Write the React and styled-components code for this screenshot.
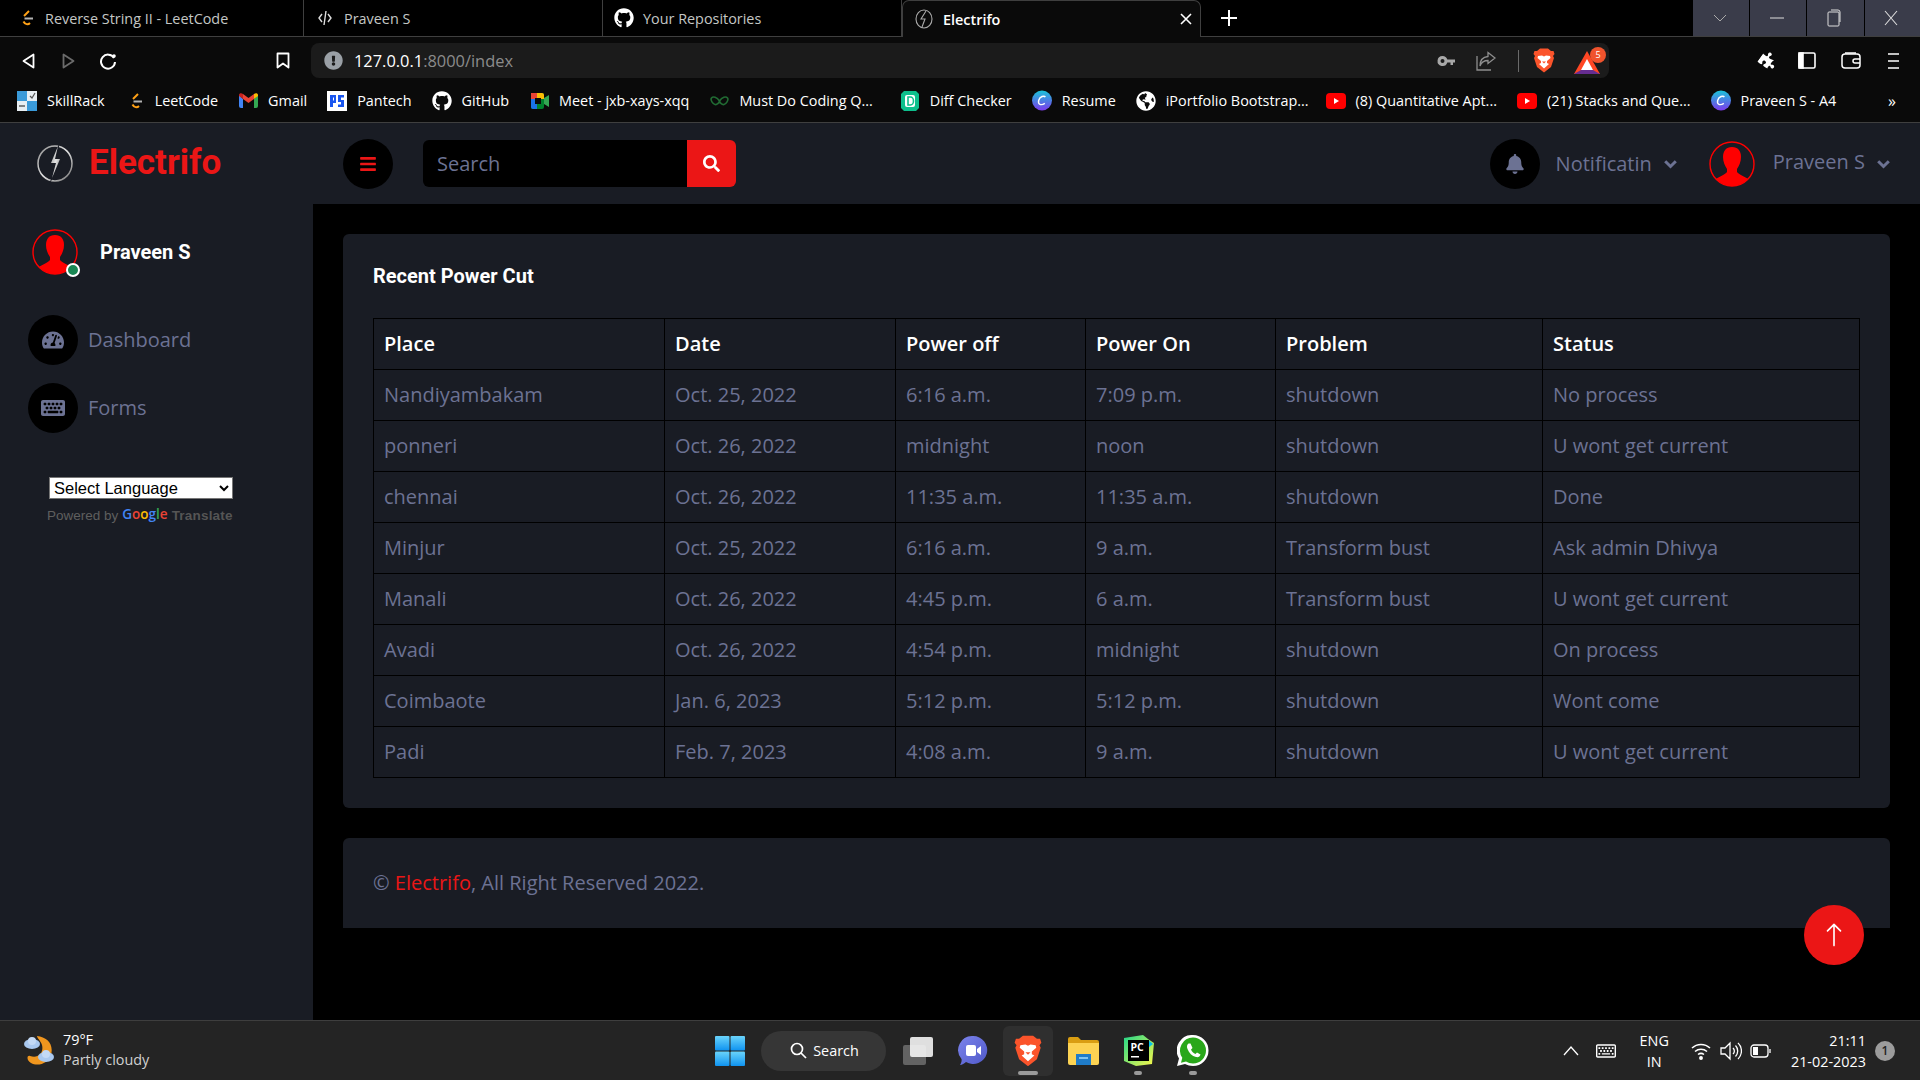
import React from 'react';
import styled, { createGlobalStyle } from 'styled-components';
import {
  FaBars, FaSearch, FaBell, FaTachometerAlt, FaKeyboard, FaGithub,
  FaPuzzlePiece, FaGlobeAmericas, FaExclamationCircle, FaRegKeyboard,
} from 'react-icons/fa';
import { BsArrowUp } from 'react-icons/bs';

const GlobalStyle = createGlobalStyle`
  html, body { margin: 0; padding: 0; background: #000; }
  * { box-sizing: border-box; }
  body { font-family: "Open Sans", sans-serif; }
`;

const Screen = styled.div`
  width: 1920px;
  height: 1080px;
  display: flex;
  flex-direction: column;
  overflow: hidden;
  position: relative;
`;

/* ---------- browser chrome ---------- */
const TabStrip = styled.div`
  height: 37px;
  background: #000;
  display: flex;
  padding-left: 5px;
  border-bottom: 1px solid #3f3f3f;
  flex-shrink: 0;
`;
const Tab = styled.div`
  width: 299px;
  height: ${p => (p.$active ? '37px' : '36px')};
  display: flex;
  align-items: center;
  padding-left: 11px;
  gap: 9px;
  font-size: 14.4px;
  color: ${p => (p.$active ? '#fff' : '#c4c7c5')};
  font-weight: ${p => (p.$active ? 600 : 400)};
  background: ${p => (p.$active ? '#0a0a0a' : 'transparent')};
  border-right: 1px solid #3f3f3f;
  border-left: ${p => (p.$active ? '1px solid #3f3f3f' : 'none')};
  border-top: ${p => (p.$active ? '1px solid #3f3f3f' : 'none')};
  border-radius: ${p => (p.$active ? '7px 7px 0 0' : '0')};
  position: relative;
  z-index: 1;
`;
const TabIcon = styled.span`
  width: 20px;
  height: 20px;
  display: flex;
  align-items: center;
  justify-content: center;
  color: #fff;
  flex-shrink: 0;
`;
const TabClose = styled.span`
  margin-left: auto;
  margin-right: 8px;
  display: flex;
`;
const NewTab = styled.div`
  width: 55px;
  height: 36px;
  display: flex;
  align-items: center;
  justify-content: center;
`;
const WindowButtons = styled.div`
  margin-left: auto;
  display: flex;
  height: 36px;
`;
const WindowButton = styled.div`
  width: ${p => p.$w}px;
  background: #3a3c4a;
  border-left: 1px solid #000;
  padding-right: 3px;
  display: flex;
  align-items: center;
  justify-content: center;
`;
const Toolbar = styled.div`
  height: 47px;
  background: #0a0a0a;
  display: flex;
  align-items: center;
  padding-left: 16px;
  flex-shrink: 0;
`;
const ToolButton = styled.div`
  width: ${p => p.$w || 24}px;
  height: 24px;
  display: flex;
  align-items: center;
  justify-content: center;
  color: ${p => p.$color || '#fff'};
  margin-left: ${p => p.$ml || 0}px;
  flex-shrink: 0;
`;
const UrlBar = styled.div`
  width: 1298px;
  height: 35px;
  margin-left: 16px;
  background: #1b1b1b;
  border-radius: 8px;
  display: flex;
  align-items: center;
  padding-left: 13px;
  flex-shrink: 0;
`;
const UrlText = styled.div`
  margin-left: 11px;
  font-size: 16.4px;
  color: #fff;
  span { color: #8b8b8b; }
`;
const UrlDivider = styled.div`
  width: 1px;
  height: 22px;
  background: #6b6b6b;
  margin-left: 20px;
  margin-right: 13px;
`;
const UrlTools = styled.div`
  margin-left: auto;
  display: flex;
  align-items: center;
  padding-right: 1px;
`;
const BookmarkBar = styled.div`
  height: 39px;
  background: #0a0a0a;
  border-bottom: 1px solid #3f3f3f;
  display: flex;
  align-items: center;
  padding: 0 0 5px 17px;
  gap: 20px;
  flex-shrink: 0;
  position: relative;
`;
const Bookmark = styled.div`
  display: flex;
  align-items: center;
  gap: 10px;
  margin-left: ${p => p.$shift || 0}px;
  font-size: 14.4px;
  color: #fff;
  white-space: nowrap;
`;
const BookmarkIcon = styled.span`
  width: 20px;
  height: 20px;
  display: flex;
  align-items: center;
  justify-content: center;
  flex-shrink: 0;
`;
const MoreBookmarks = styled.div`
  margin-left: auto;
  margin-right: 24px;
  color: #fff;
  font-size: 16px;
`;

/* ---------- app ---------- */
const AppFrame = styled.div`
  flex: 1;
  display: flex;
  min-height: 0;
  background: #000;
`;
const Sidebar = styled.aside`
  width: 313px;
  background: #191c24;
  flex-shrink: 0;
`;
const Brand = styled.div`
  height: 81px;
  display: flex;
  align-items: center;
  padding-left: 36px;
  gap: 15px;
`;
const BrandName = styled.h3`
  margin: 0 0 2px;
  font-family: Roboto, sans-serif;
  font-weight: 700;
  font-size: 35px;
  line-height: 1.2;
  color: #eb1616;
`;
const Profile = styled.div`
  margin-top: 25px;
  padding-left: 32px;
  display: flex;
  align-items: center;
  gap: 22px;
`;
const AvatarWrap = styled.div`
  position: relative;
  width: 46px;
  height: 46px;
`;
const OnlineDot = styled.span`
  position: absolute;
  right: -2px;
  bottom: -2px;
  width: 14px;
  height: 14px;
  border-radius: 50%;
  background: #198754;
  border: 2px solid #fff;
`;
const ProfileName = styled.h6`
  margin: 0;
  font-family: Roboto, sans-serif;
  font-weight: 700;
  font-size: 20px;
  line-height: 1.2;
  color: #fff;
`;
const SideNav = styled.nav`
  margin-top: 40px;
  padding-left: 28px;
  display: flex;
  flex-direction: column;
  gap: 18px;
`;
const SideLink = styled.a`
  display: flex;
  align-items: center;
  gap: 10px;
  font-size: 20px;
  color: #6c7293;
`;
const SideLabel = styled.span`
  margin-top: -2px;
`;
const IconCircle = styled.span`
  width: 50px;
  height: 50px;
  border-radius: 50%;
  background: #000;
  display: flex;
  align-items: center;
  justify-content: center;
  color: ${p => p.$color || '#6c7293'};
  flex-shrink: 0;
`;
const Translate = styled.div`
  margin-top: 44px;
  padding-left: 47px;
`;
const LangSelect = styled.select`
  display: block;
  margin-left: 2px;
  width: 184px;
  height: 22px;
  font-family: "Liberation Sans", Arial, sans-serif;
  font-size: 16.5px;
  background: #fff;
  color: #000;
  border: 1px solid #767676;
`;
const PoweredBy = styled.div`
  margin-top: 9px;
  font-size: 13.5px;
  color: #5f5f5f;
  font-family: "Liberation Sans", Arial, sans-serif;
  display: flex;
  align-items: center;
  gap: 4px;
  white-space: nowrap;
`;
const GoogleWord = styled.b`
  font-family: "Open Sans", sans-serif;
  font-weight: 600;
  font-size: 13.5px;
  margin-top: -4px;
  span:nth-child(1) { color: #4285f4; }
  span:nth-child(2) { color: #ea4335; }
  span:nth-child(3) { color: #fbbc05; }
  span:nth-child(4) { color: #4285f4; }
  span:nth-child(5) { color: #34a853; }
  span:nth-child(6) { color: #ea4335; }
`;
const TranslateWord = styled.span`
  font-weight: 700;
  color: #555;
  letter-spacing: .2px;
`;

const Main = styled.main`
  flex: 1;
  min-width: 0;
  display: flex;
  flex-direction: column;
`;
const TopBar = styled.header`
  height: 81px;
  background: #191c24;
  display: flex;
  align-items: center;
  padding: 0 30px;
  flex-shrink: 0;
`;
const SearchBox = styled.div`
  margin-left: 30px;
  display: flex;
  height: 47px;
`;
const SearchInput = styled.input`
  width: 264px;
  height: 47px;
  background: #000;
  border: none;
  border-radius: 6px 0 0 6px;
  padding: 0 14px;
  font-family: "Open Sans", sans-serif;
  font-size: 20px;
  color: #6c7293;
  outline: none;
  &::placeholder { color: #6c7293; opacity: 1; }
`;
const SearchButton = styled.button`
  width: 49px;
  height: 47px;
  border: none;
  background: #eb1616;
  border-radius: 0 6px 6px 0;
  color: #fff;
  display: flex;
  align-items: center;
  justify-content: center;
  padding: 0;
`;
const TopRight = styled.div`
  margin-left: auto;
  display: flex;
  align-items: center;
`;
const TopLink = styled.div`
  display: flex;
  align-items: center;
  font-size: 20px;
  color: #6c7293;
  margin-left: ${p => p.$ml || 0}px;
`;
const TopLabel = styled.span`
  margin-left: ${p => p.$ml}px;
  margin-right: 12px;
  margin-top: ${p => p.$mt || 0}px;
  white-space: nowrap;
`;
const Content = styled.div`
  padding: 30px 30px 0;
`;
const Card = styled.section`
  background: #191c24;
  border-radius: 6px;
  padding: 30px;
`;
const CardTitle = styled.h6`
  margin: 0 0 30px;
  font-family: Roboto, sans-serif;
  font-weight: 700;
  font-size: 20px;
  line-height: 1.2;
  color: #fff;
`;
const Table = styled.table`
  width: 1486px;
  table-layout: fixed;
  border-collapse: collapse;
  font-size: 20px;
  line-height: 30px;
  color: #6c7293;
  th, td {
    border: 1px solid #000;
    padding: 10px;
    text-align: left;
    white-space: nowrap;
  }
  th {
    color: #fff;
    font-weight: 600;
  }
`;
const Footer = styled.footer`
  margin-top: 30px;
  background: #191c24;
  border-radius: 6px 6px 0 0;
  padding: 30px;
  font-size: 20px;
  line-height: 30px;
  color: #6c7293;
  span { color: #eb1616; }
`;
const BackToTop = styled.a`
  position: absolute;
  left: 1804px;
  top: 905px;
  width: 60px;
  height: 60px;
  border-radius: 50%;
  background: #eb1616;
  color: #fff;
  display: flex;
  align-items: center;
  justify-content: center;
`;

/* ---------- taskbar ---------- */
const Taskbar = styled.div`
  height: 60px;
  background: #242424;
  border-top: 1px solid #3e3e3e;
  display: grid;
  grid-template-columns: 715px 1fr auto;
  align-items: center;
  flex-shrink: 0;
  color: #fff;
`;
const Weather = styled.div`
  display: flex;
  align-items: center;
  padding-left: 24px;
  gap: 8px;
`;
const WeatherText = styled.div`
  font-size: 14.4px;
  line-height: 20px;
  margin-top: -2px;
  color: #fff;
  small { display: block; font-size: 14.4px; color: #d0d0d0; }
`;
const TaskCenter = styled.div`
  display: flex;
  align-items: center;
`;
const TaskSearch = styled.div`
  margin-left: 16px;
  width: 125px;
  height: 40px;
  background: #363636;
  border-radius: 20px;
  display: flex;
  align-items: center;
  justify-content: center;
  gap: 6px;
  font-size: 14.4px;
  margin-right: 7px;
  padding-left: 2px;
`;
const TaskApp = styled.div`
  width: 50px;
  height: 50px;
  margin-right: 5px;
  display: flex;
  align-items: center;
  justify-content: center;
  position: relative;
  border-radius: 6px;
  background: ${p => (p.$focus ? '#2f2f2f' : 'transparent')};
  &::after {
    content: '';
    display: ${p => (p.$open ? 'block' : 'none')};
    position: absolute;
    bottom: 1px;
    left: 50%;
    transform: translateX(-50%);
    width: ${p => (p.$focus ? '20px' : '8px')};
    height: 4px;
    border-radius: 2px;
    background: #9a9a9a;
  }
`;
const Tray = styled.div`
  display: flex;
  align-items: center;
  padding-right: 25px;
`;
const TrayIcon = styled.span`
  width: 24px;
  display: flex;
  justify-content: center;
  margin-left: ${p => p.$ml || 0}px;
`;
const Lang = styled.div`
  margin-left: 22px;
  margin-right: 20px;
  text-align: center;
  font-size: 14.4px;
  line-height: 21px;
`;
const Clock = styled.div`
  margin-left: 18px;
  text-align: right;
  font-size: 14.4px;
  line-height: 21px;
`;
const NotifBadge = styled.span`
  margin-left: 9px;
  width: 20px;
  height: 20px;
  border-radius: 50%;
  background: #9c9c9c;
  color: #222;
  font-size: 12px;
  font-weight: 600;
  display: flex;
  align-items: center;
  justify-content: center;
`;

/* ---------- drawings ---------- */
const Chevron = () => (
  <svg width="13" height="10" viewBox="0 0 13 10" fill="none" stroke="currentColor" strokeWidth="3">
    <path d="M1.200 2.200 6.500 7.500l5.300-5.300" />
  </svg>
);

const Avatar = ({ id }) => (
  <svg width="46" height="46" viewBox="0 0 46 46">
    <defs>
      <clipPath id={id}><circle cx="23" cy="23" r="22" /></clipPath>
    </defs>
    <g clipPath={`url(#${id})`} fill="#ff0000">
      <path d="M23 6c6 0 9 4 9 10 0 5-2 9-4 12v3c2 3 9 5 13 8v8H5v-8c4-3 11-5 13-8v-3c-2-3-4-7-4-12 0-6 3-10 9-10z" />
    </g>
    <circle cx="23" cy="23" r="22" fill="none" stroke="#ff0000" strokeWidth="1.400" />
  </svg>
);

const LogoMark = () => (
  <svg width="38" height="43" viewBox="0 0 38 43">
    <defs>
      <linearGradient id="metal" x1="0" y1="0" x2="1" y2="1">
        <stop offset="0" stopColor="#8a8a8a" />
        <stop offset=".5" stopColor="#e4e4e4" />
        <stop offset="1" stopColor="#6f6f6f" />
      </linearGradient>
    </defs>
    <ellipse cx="19" cy="21.500" rx="17" ry="17.500" fill="none" stroke="url(#metal)" strokeWidth="1.500" />
    <path d="M24 0 13 22h7l-7 21 14-26h-7z" fill="#191c24" />
    <path d="M22 4 15 21h5l-4 15 8-19h-5z" fill="url(#metal)" />
  </svg>
);

const LeetIcon = () => (
  <svg width="16" height="20" viewBox="0 0 16 20" fill="none" strokeWidth="2">
    <path d="M11 3 6 8" stroke="#ffa116" />
    <path d="M5.500 13.500c1.500 3 4.500 3.500 6.500 1.500" stroke="#ffa116" />
    <path d="M6.500 10.500H15" stroke="#b3b3b3" />
  </svg>
);

const SkillRackIcon = () => (
  <svg width="20" height="20" viewBox="0 0 20 20">
    <rect width="10" height="10" fill="#3a9ad9" />
    <rect x="10" width="10" height="10" fill="#e8eef2" />
    <rect y="10" width="10" height="10" fill="#e8eef2" />
    <rect x="10" y="10" width="10" height="10" fill="#3a9ad9" />
    <path d="M13 5l2 2 3-5" stroke="#555" strokeWidth="1.200" fill="none" />
    <path d="M2 15h6" stroke="#555" strokeWidth="1.400" />
  </svg>
);
const GmailIcon = () => (
  <svg width="19" height="15" viewBox="0 0 19 15">
    <path d="M0 2v11a2 2 0 0 0 2 2h2V6z" fill="#4285f4" />
    <path d="M19 2v11a2 2 0 0 1-2 2h-2V6z" fill="#34a853" />
    <path d="M15 1v5l4-3V2c0-2-2.500-2.500-4-1z" fill="#fbbc04" />
    <path d="M4 6V1l5.500 4L15 1v5l-5.500 4z" fill="#ea4335" />
    <path d="M0 2v1l4 3V1C2.500-.5 0 0 0 2z" fill="#c5221f" />
  </svg>
);
const PantechIcon = () => (
  <svg width="20" height="20" viewBox="0 0 20 20">
    <rect width="20" height="20" fill="#fff" />
    <path fillRule="evenodd" d="M3 4h6v8H6v4H3zM6 6.500v3h1v-3z" fill="#1a56f0" />
    <path d="M11 4h6v2.500h-3V9h3v7h-6v-2.500h3V11h-3z" fill="#1a56f0" />
  </svg>
);
const MeetIcon = () => (
  <svg width="19" height="18" viewBox="0 0 19 18">
    <rect x="1" y="1" width="13" height="16" rx="2" fill="#00832d" />
    <path d="M1 1h6v6H1z" fill="#ea4335" />
    <path d="M7 1h5a2 2 0 0 1 2 2v4H7z" fill="#fbbc04" />
    <path d="M1 7h6v10H3a2 2 0 0 1-2-2z" fill="#1a73e8" />
    <rect x="5" y="6" width="6" height="6" fill="#0a0a0a" />
    <path d="M14 6l5-3v12l-5-3z" fill="#34a853" />
  </svg>
);
const MustDoIcon = () => (
  <svg width="19" height="12" viewBox="0 0 19 12" fill="none" stroke="#216b33" strokeWidth="1.600">
    <path d="M9.500 6C7 2 3 1 1.500 3S3 9 5 9.500 9 8 9.500 6zM9.500 6c2.500-4 6.500-5 8-3s-1.500 6-3.500 6.500S10 8 9.500 6z" />
  </svg>
);
const DiffIcon = () => (
  <svg width="18" height="20" viewBox="0 0 18 20">
    <path d="M3 0h12l3 3v14l-3 3H3l-3-3V3z" fill="#0dbf8c" />
    <rect x="4" y="4" width="10" height="12" rx="2" fill="#fff" />
    <path d="M7 6h2.500a3 4 0 0 1 0 8H7z" fill="none" stroke="#0dbf8c" strokeWidth="1.600" />
  </svg>
);
const CanvaIcon = ({ id }) => (
  <svg width="21" height="21" viewBox="0 0 21 21">
    <defs>
      <linearGradient id={id} x1="0" y1="0" x2="0" y2="1">
        <stop offset="0" stopColor="#1bc4d8" />
        <stop offset="1" stopColor="#7c3aed" />
      </linearGradient>
    </defs>
    <circle cx="10.500" cy="10.500" r="10.500" fill={`url(#${id})`} />
    <path d="M14 7c-1-2-6-1-7 3.500S9.500 16 13.500 13.500" fill="none" stroke="#fff" strokeWidth="1.500" />
  </svg>
);
const YouTubeIcon = () => (
  <svg width="20" height="16" viewBox="0 0 20 16">
    <rect width="20" height="16" rx="4" fill="#f00" />
    <path d="M8 5l5 3-5 3z" fill="#fff" />
  </svg>
);
const BraveLion = ({ size = 22 }) => (
  <svg width={size} height={size * 1.14} viewBox="0 0 22 25">
    <path d="M4 3 7 .5h8L18 3l2.500 0 1 3L20 8l1 2-3 9-7 5.500L4 19l-3-9 1-2L.5 6l1-3z" fill="#fb542b" />
    <path d="M5 8l4-.5 2 1 2-1 4 .5.500 2L14 13v2l2 1-5 4.500L6 16l2-1v-2l-3.500-3z" fill="#fff" />
    <path d="M9 13.500h4L11 15.500z" fill="#fb542b" />
  </svg>
);
const BatIcon = () => (
  <svg width="34" height="28" viewBox="0 0 34 28">
    <path d="M13 4 0 27h26z" fill="#ff4724" />
    <path d="M13 12 7 23h12z" fill="#fff" />
    <path d="M0 27l7-4h12l7 4z" fill="#662d91" />
    <circle cx="24" cy="8" r="8" fill="#f0532d" />
    <text x="24" y="11" fontSize="9" fill="#fff" textAnchor="middle" fontFamily="Open Sans">5</text>
  </svg>
);
const WindowsLogo = () => (
  <svg width="30" height="30" viewBox="0 0 30 30">
    <defs>
      <linearGradient id="winblue" x1="0" y1="0" x2="0" y2="1">
        <stop offset="0" stopColor="#6ad4fb" />
        <stop offset="1" stopColor="#0f93f0" />
      </linearGradient>
    </defs>
    <rect width="14.500" height="14.500" rx="1" fill="url(#winblue)" />
    <rect x="15.500" width="14.500" height="14.500" rx="1" fill="url(#winblue)" />
    <rect y="15.500" width="14.500" height="14.500" rx="1" fill="url(#winblue)" />
    <rect x="15.500" y="15.500" width="14.500" height="14.500" rx="1" fill="url(#winblue)" />
  </svg>
);
const WeatherIcon = () => (
  <svg width="31" height="31" viewBox="0 0 31 31">
    <path d="M13 1c10 1 17 8 14 19-2 8-13 12-20 8C2 25 3 20 6 21c8 3 14-3 12-11-1-4-5-7-5-9z" fill="#f0961e" />
    <ellipse cx="8" cy="9" rx="8" ry="5" fill="#a9c8ef" />
    <ellipse cx="8" cy="6" rx="4" ry="4" fill="#c3d9f5" />
    <ellipse cx="22" cy="22" rx="8" ry="5" fill="#a9c8ef" />
    <ellipse cx="22" cy="19" rx="4" ry="4" fill="#c3d9f5" />
  </svg>
);
const TaskView = () => (
  <svg width="31" height="28" viewBox="0 0 31 28">
    <rect x="0" y="8" width="23" height="20" rx="2" fill="#636363" />
    <rect x="7" y="0" width="23" height="20" rx="2" fill="#f4f4f4" fillOpacity=".9" />
  </svg>
);
const TeamsIcon = () => (
  <svg width="30" height="32" viewBox="0 0 30 32">
    <defs>
      <linearGradient id="teams" x1="0" y1="0" x2="1" y2="1">
        <stop offset="0" stopColor="#7b83eb" />
        <stop offset="1" stopColor="#5059c9" />
      </linearGradient>
    </defs>
    <path d="M15 1a14 14 0 1 1-7 26c-1.500 1.500-4 3-6 3 1-1.500 2-4 1.500-6A14 14 0 0 1 15 1z" fill="url(#teams)" />
    <rect x="8" y="10" width="10" height="11" rx="2" fill="#fff" />
    <path d="M19 14l4-3v9l-4-3z" fill="#fff" />
  </svg>
);
const FolderIcon = () => (
  <svg width="31" height="28" viewBox="0 0 31 28">
    <path d="M0 2a2 2 0 0 1 2-2h8l3 3h16a2 2 0 0 1 2 2v4H0z" fill="#d99e12" />
    <path d="M0 6h31v20a2 2 0 0 1-2 2H2a2 2 0 0 1-2-2z" fill="#fcd353" />
    <rect x="8" y="17" width="15" height="11" fill="#1f7cc9" />
    <rect x="11" y="20" width="9" height="2" fill="#7fc4f2" />
  </svg>
);
const PyCharmIcon = () => (
  <svg width="31" height="31" viewBox="0 0 31 31">
    <defs>
      <linearGradient id="pyc" x1="0" y1="0" x2="1" y2="1">
        <stop offset="0" stopColor="#21d789" />
        <stop offset="1" stopColor="#fcf84a" />
      </linearGradient>
    </defs>
    <path d="M1 3 20 0l5 4 6 4-2 21-16 2-12-5z" fill="url(#pyc)" />
    <path d="M25 5l5 4-4 3z" fill="#07c3f2" />
    <rect x="5" y="5" width="21" height="21" fill="#000" />
    <text x="7.500" y="16" fontSize="10.500" fontWeight="700" fill="#fff" fontFamily="Open Sans">PC</text>
    <rect x="8" y="21" width="8" height="1.500" fill="#fff" />
  </svg>
);
const WhatsAppIcon = () => (
  <svg width="32" height="32" viewBox="0 0 32 32">
    <path d="M16 0a15.500 15.500 0 0 1 0 31c-3 0-5.500-.7-8-2l-8 2 2-7.500A15.500 15.500 0 0 1 16 0z" fill="#fff" />
    <path d="M16 2.500a13 13 0 0 1 0 26c-2.500 0-5-.7-7-2l-5 1.300 1.300-5A13 13 0 0 1 16 2.500z" fill="#29a71a" />
    <path d="M11.500 8.500c-1.500 1-2 3-1 5.500 1.500 4 4.500 7 8.500 8 2.500.5 4-.5 4.500-2.500l-3.500-2-1.500 1.500c-2-.8-3.700-2.500-4.500-4.500l1.500-1.500-2-4.500z" fill="#fff" />
  </svg>
);

const BOOKMARKS = [
  { label: 'SkillRack', icon: <SkillRackIcon /> },
  { label: 'LeetCode', icon: <LeetIcon /> },
  { label: 'Gmail', icon: <GmailIcon /> },
  { label: 'Pantech', icon: <PantechIcon /> },
  { label: 'GitHub', icon: <FaGithub size={20} color="#fff" /> },
  { label: 'Meet - jxb-xays-xqq', icon: <MeetIcon /> },
  { label: 'Must Do Coding Q...', icon: <MustDoIcon /> },
  { label: 'Diff Checker', icon: <DiffIcon />, shift: 7 },
  { label: 'Resume', icon: <CanvaIcon id="canva-a" /> },
  { label: 'iPortfolio Bootstrap...', icon: <FaGlobeAmericas size={20} color="#fff" /> },
  { label: '(8) Quantitative Apt...', icon: <YouTubeIcon />, shift: -3 },
  { label: '(21) Stacks and Que...', icon: <YouTubeIcon /> },
  { label: 'Praveen S - A4', icon: <CanvaIcon id="canva-b" /> },
];

const COLUMNS = [
  { title: 'Place', width: 291 },
  { title: 'Date', width: 231 },
  { title: 'Power off', width: 190 },
  { title: 'Power On', width: 190 },
  { title: 'Problem', width: 267 },
  { title: 'Status', width: 317 },
];

const ROWS = [
  ['Nandiyambakam', 'Oct. 25, 2022', '6:16 a.m.', '7:09 p.m.', 'shutdown', 'No process'],
  ['ponneri', 'Oct. 26, 2022', 'midnight', 'noon', 'shutdown', 'U wont get current'],
  ['chennai', 'Oct. 26, 2022', '11:35 a.m.', '11:35 a.m.', 'shutdown', 'Done'],
  ['Minjur', 'Oct. 25, 2022', '6:16 a.m.', '9 a.m.', 'Transform bust', 'Ask admin Dhivya'],
  ['Manali', 'Oct. 26, 2022', '4:45 p.m.', '6 a.m.', 'Transform bust', 'U wont get current'],
  ['Avadi', 'Oct. 26, 2022', '4:54 p.m.', 'midnight', 'shutdown', 'On process'],
  ['Coimbaote', 'Jan. 6, 2023', '5:12 p.m.', '5:12 p.m.', 'shutdown', 'Wont come'],
  ['Padi', 'Feb. 7, 2023', '4:08 a.m.', '9 a.m.', 'shutdown', 'U wont get current'],
];

export default function App() {
  return (
    <Screen>
      <GlobalStyle />
      <TabStrip>
        <Tab>
          <TabIcon><LeetIcon /></TabIcon>
          Reverse String II - LeetCode
        </Tab>
        <Tab>
          <TabIcon>
            <svg width="14" height="18" viewBox="0 0 14 18" fill="none" stroke="#ddd" strokeWidth="1.400">
              <path d="M4 5 1 9l3 4M10 5l3 4-3 4M8 2 6 16" />
            </svg>
          </TabIcon>
          Praveen S
        </Tab>
        <Tab>
          <TabIcon><FaGithub size={20} /></TabIcon>
          Your Repositories
        </Tab>
        <Tab $active>
          <TabIcon>
            <svg width="18" height="20" viewBox="0 0 18 20" fill="none" stroke="#aaa" strokeWidth="1.100">
              <ellipse cx="9" cy="10" rx="8" ry="9" />
              <path d="M11 2 6 10h4l-3 8" />
            </svg>
          </TabIcon>
          Electrifo
          <TabClose>
            <svg width="12" height="12" viewBox="0 0 12 12" stroke="#fff" strokeWidth="1.600">
              <path d="M1 1l10 10M11 1 1 11" />
            </svg>
          </TabClose>
        </Tab>
        <NewTab>
          <svg width="16" height="16" viewBox="0 0 16 16" stroke="#fff" strokeWidth="2">
            <path d="M8 0v16M0 8h16" />
          </svg>
        </NewTab>
        <WindowButtons>
          <WindowButton $w={57}>
            <svg width="14" height="8" viewBox="0 0 14 8" fill="none" stroke="#aaa"><path d="M1 1l6 6 6-6" /></svg>
          </WindowButton>
          <WindowButton $w={57}>
            <svg width="14" height="2" viewBox="0 0 14 2" stroke="#ddd"><path d="M0 1h14" /></svg>
          </WindowButton>
          <WindowButton $w={58}>
            <svg width="14" height="18" viewBox="0 0 14 18" fill="none" stroke="#ddd">
              <rect x="1" y="3" width="11" height="14" rx="1" /><path d="M4 1h7a2 2 0 0 1 2 2v10" />
            </svg>
          </WindowButton>
          <WindowButton $w={56}>
            <svg width="14" height="16" viewBox="0 0 14 16" stroke="#ddd" strokeWidth="1.100"><path d="M1 1l12 14M13 1 1 15" /></svg>
          </WindowButton>
        </WindowButtons>
      </TabStrip>

      <Toolbar>
        <ToolButton>
          <svg width="13" height="16" viewBox="0 0 13 16" fill="none" stroke="#fff" strokeWidth="1.800" strokeLinejoin="round">
            <path d="M11.500 1.500v13L1.500 8z" />
          </svg>
        </ToolButton>
        <ToolButton $ml={16}>
          <svg width="13" height="16" viewBox="0 0 13 16" fill="none" stroke="#6b6b6b" strokeWidth="1.800" strokeLinejoin="round">
            <path d="M1.500 1.500v13l10-6.500z" />
          </svg>
        </ToolButton>
        <ToolButton $ml={16}>
          <svg width="18" height="18" viewBox="0 0 18 18" fill="none" stroke="#fff" strokeWidth="2">
            <path d="M15 6a7 7 0 1 0 1 4" />
            <circle cx="15" cy="4" r="1.800" fill="#fff" stroke="none" />
          </svg>
        </ToolButton>
        <ToolButton $ml={151}>
          <svg width="14" height="17" viewBox="0 0 14 17" fill="none" stroke="#fff" strokeWidth="1.800" strokeLinejoin="round">
            <path d="M1.500 1.500h11v14L7 11.500l-5.500 4z" />
          </svg>
        </ToolButton>
        <UrlBar>
          <FaExclamationCircle size={19} color="#9aa0a6" />
          <UrlText>127.0.0.1<span>:8000/index</span></UrlText>
          <UrlTools>
            <ToolButton>
              <svg width="18" height="12" viewBox="0 0 18 12" fill="#a8a8a8">
                <path fillRule="evenodd" d="M5.500 1a5 5 0 0 1 4.800 3.500H18v3h-2v2.500h-2.500V7.500h-3.200A5 5 0 1 1 5.500 1zm0 3a2 2 0 1 0 0 4 2 2 0 0 0 0-4z" />
              </svg>
            </ToolButton>
            <ToolButton $ml={16}>
              <svg width="20" height="20" viewBox="0 0 20 20" fill="none" stroke="#8f8f8f" strokeWidth="1.300">
                <path d="M1 5v14h14M12 1.500l7 5.500-7 5.500V9.500C8 9.500 5.500 11 4 15c0-6 3-9 8-9.500z" />
              </svg>
            </ToolButton>
            <UrlDivider />
            <ToolButton><BraveLion /></ToolButton>
            <ToolButton $ml={18} $w={34}><BatIcon /></ToolButton>
          </UrlTools>
        </UrlBar>
        <ToolButton $ml={147}><FaPuzzlePiece size={17} style={{ transform: 'rotate(35deg)' }} /></ToolButton>
        <ToolButton $ml={15}>
          <svg width="18" height="17" viewBox="0 0 18 17" fill="none" stroke="#fff" strokeWidth="1.600">
            <rect x="1" y="1" width="16" height="15" rx="1.500" /><rect x="1" y="1" width="4" height="15" fill="#fff" />
          </svg>
        </ToolButton>
        <ToolButton $ml={20}>
          <svg width="20" height="17" viewBox="0 0 20 17" fill="none" stroke="#fff" strokeWidth="1.500">
            <rect x="1" y="2" width="18" height="14" rx="3" /><path d="M4 1h11" />
            <path d="M19 7h-5a2 2 0 0 0 0 4h5" />
          </svg>
        </ToolButton>
        <ToolButton $ml={18}>
          <svg width="11" height="16" viewBox="0 0 11 16" stroke="#fff" strokeWidth="1.500"><path d="M0 1h11M0 8h11M0 15h11" /></svg>
        </ToolButton>
      </Toolbar>

      <BookmarkBar>
        {BOOKMARKS.map(b => (
          <Bookmark key={b.label} $shift={b.shift}>
            <BookmarkIcon>{b.icon}</BookmarkIcon>
            {b.label}
          </Bookmark>
        ))}
        <MoreBookmarks>»</MoreBookmarks>
      </BookmarkBar>

      <AppFrame>
        <Sidebar>
          <Brand>
            <LogoMark />
            <BrandName>Electrifo</BrandName>
          </Brand>
          <Profile>
            <AvatarWrap>
              <Avatar id="avatar-side" />
              <OnlineDot />
            </AvatarWrap>
            <ProfileName>Praveen S</ProfileName>
          </Profile>
          <SideNav>
            <SideLink>
              <IconCircle><FaTachometerAlt size={22} /></IconCircle>
              <SideLabel>Dashboard</SideLabel>
            </SideLink>
            <SideLink>
              <IconCircle><FaKeyboard size={24} /></IconCircle>
              <SideLabel>Forms</SideLabel>
            </SideLink>
          </SideNav>
          <Translate>
            <LangSelect defaultValue="">
              <option value="">Select Language</option>
            </LangSelect>
            <PoweredBy>
              Powered by
              <GoogleWord>
                <span>G</span><span>o</span><span>o</span><span>g</span><span>l</span><span>e</span>
              </GoogleWord>
              <TranslateWord>Translate</TranslateWord>
            </PoweredBy>
          </Translate>
        </Sidebar>

        <Main>
          <TopBar>
            <IconCircle $color="#eb1616"><FaBars size={18} /></IconCircle>
            <SearchBox>
              <SearchInput placeholder="Search" />
              <SearchButton><FaSearch size={17} /></SearchButton>
            </SearchBox>
            <TopRight>
              <TopLink>
                <IconCircle><FaBell size={20} /></IconCircle>
                <TopLabel $ml={16}>Notificatin</TopLabel>
                <Chevron />
              </TopLink>
              <TopLink $ml={32}>
                <Avatar id="avatar-top" />
                <TopLabel $ml={18} $mt={-4}>Praveen S</TopLabel>
                <Chevron />
              </TopLink>
            </TopRight>
          </TopBar>
          <Content>
            <Card>
              <CardTitle>Recent Power Cut</CardTitle>
              <Table>
                <colgroup>
                  {COLUMNS.map(c => <col key={c.title} width={c.width} />)}
                </colgroup>
                <thead>
                  <tr>{COLUMNS.map(c => <th key={c.title}>{c.title}</th>)}</tr>
                </thead>
                <tbody>
                  {ROWS.map(row => (
                    <tr key={row[0]}>
                      {row.map((cell, i) => <td key={i}>{cell}</td>)}
                    </tr>
                  ))}
                </tbody>
              </Table>
            </Card>
            <Footer>© <span>Electrifo</span>, All Right Reserved 2022.</Footer>
          </Content>
        </Main>
      </AppFrame>

      <BackToTop><BsArrowUp size={26} /></BackToTop>

      <Taskbar>
        <Weather>
          <WeatherIcon />
          <WeatherText>
            79°F
            <small>Partly cloudy</small>
          </WeatherText>
        </Weather>
        <TaskCenter>
          <WindowsLogo />
          <TaskSearch>
            <svg width="17" height="17" viewBox="0 0 17 17" fill="none" stroke="#fff" strokeWidth="1.700">
              <circle cx="7" cy="7" r="5.500" /><path d="M11 11l5 5" />
            </svg>
            Search
          </TaskSearch>
          <TaskApp><TaskView /></TaskApp>
          <TaskApp><TeamsIcon /></TaskApp>
          <TaskApp $focus $open><BraveLion size={28} /></TaskApp>
          <TaskApp><FolderIcon /></TaskApp>
          <TaskApp $open><PyCharmIcon /></TaskApp>
          <TaskApp $open><WhatsAppIcon /></TaskApp>
        </TaskCenter>
        <Tray>
          <TrayIcon>
            <svg width="16" height="10" viewBox="0 0 16 10" fill="none" stroke="#fff" strokeWidth="1.300"><path d="M1 9l7-8 7 8" /></svg>
          </TrayIcon>
          <TrayIcon $ml={11}><FaRegKeyboard size={20} color="#fff" /></TrayIcon>
          <Lang>ENG<br />IN</Lang>
          <TrayIcon>
            <svg width="20" height="18" viewBox="0 0 20 18" fill="none" stroke="#fff" strokeWidth="1.500">
              <path d="M1 6a13 13 0 0 1 18 0M4 9.500a9 9 0 0 1 12 0M7 12.500a5 5 0 0 1 6 0" /><circle cx="10" cy="16" r="1.200" fill="#fff" />
            </svg>
          </TrayIcon>
          <TrayIcon $ml={6}>
            <svg width="22" height="20" viewBox="0 0 22 20" fill="none" stroke="#fff" strokeWidth="1.300">
              <path d="M1 7v6h4l5 5V2L5 7zM13 7a4 4 0 0 1 0 6M15.500 4.500a8 8 0 0 1 0 11M18 2a11 11 0 0 1 0 16" />
            </svg>
          </TrayIcon>
          <TrayIcon $ml={6}>
            <svg width="21" height="14" viewBox="0 0 21 14" fill="none" stroke="#fff" strokeWidth="1.300">
              <rect x="1" y="1" width="17" height="12" rx="3" /><rect x="3" y="3" width="5" height="8" fill="#fff" stroke="none" /><path d="M20 5v4" />
            </svg>
          </TrayIcon>
          <Clock>21:11<br />21-02-2023</Clock>
          <NotifBadge>1</NotifBadge>
        </Tray>
      </Taskbar>
    </Screen>
  );
}
